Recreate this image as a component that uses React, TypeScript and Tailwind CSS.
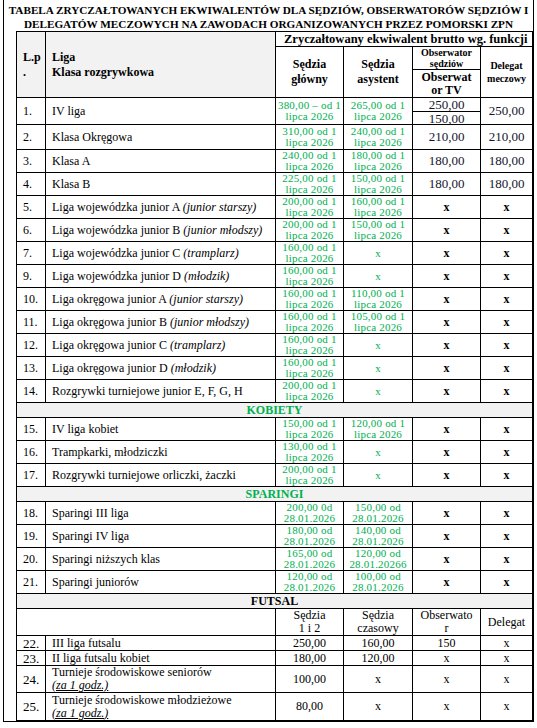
type Val = string | string[];

type Row = {
  n: string;
  name: React.ReactNode;
  g: Val;
  a: Val;
  obs: Val;
  del: string;
};

const od = (v: string) => [`${v} od 1`, 'lipca 2026'];

const main: Row[] = [
  { n: '1.', name: 'IV liga', g: ['380,00 – od 1', 'lipca 2026'], a: od('265,00'), obs: ['250,00', '150,00'], del: '250,00' },
  { n: '2.', name: 'Klasa Okręgowa', g: od('310,00'), a: od('240,00'), obs: '210,00', del: '210,00' },
  { n: '3.', name: 'Klasa A', g: od('240,00'), a: od('180,00'), obs: '180,00', del: '180,00' },
  { n: '4.', name: 'Klasa B', g: od('225,00'), a: od('150,00'), obs: '180,00', del: '180,00' },
  { n: '5.', name: <>Liga wojewódzka junior A <i>(junior starszy)</i></>, g: od('200,00'), a: od('160,00'), obs: 'x', del: 'x' },
  { n: '6.', name: <>Liga wojewódzka junior B <i>(junior młodszy)</i></>, g: od('200,00'), a: od('150,00'), obs: 'x', del: 'x' },
  { n: '7.', name: <>Liga wojewódzka junior C <i>(tramplarz)</i></>, g: od('160,00'), a: 'x', obs: 'x', del: 'x' },
  { n: '9.', name: <>Liga wojewódzka junior D <i>(młodzik)</i></>, g: od('160,00'), a: 'x', obs: 'x', del: 'x' },
  { n: '10.', name: <>Liga okręgowa junior A <i>(junior starszy)</i></>, g: od('160,00'), a: od('110,00'), obs: 'x', del: 'x' },
  { n: '11.', name: <>Liga okręgowa junior B <i>(junior młodszy)</i></>, g: od('160,00'), a: od('105,00'), obs: 'x', del: 'x' },
  { n: '12.', name: <>Liga okręgowa junior C <i>(tramplarz)</i></>, g: od('160,00'), a: 'x', obs: 'x', del: 'x' },
  { n: '13.', name: <>Liga okręgowa junior D <i>(młodzik)</i></>, g: od('160,00'), a: 'x', obs: 'x', del: 'x' },
  { n: '14.', name: 'Rozgrywki turniejowe junior E, F, G, H', g: od('200,00'), a: 'x', obs: 'x', del: 'x' },
];

const kobiety: Row[] = [
  { n: '15.', name: 'IV liga kobiet', g: od('150,00'), a: od('120,00'), obs: 'x', del: 'x' },
  { n: '16.', name: 'Trampkarki, młodziczki', g: od('130,00'), a: 'x', obs: 'x', del: 'x' },
  { n: '17.', name: 'Rozgrywki turniejowe orliczki, żaczki', g: od('200,00'), a: 'x', obs: 'x', del: 'x' },
];

const sparingi: Row[] = [
  { n: '18.', name: 'Sparingi III liga', g: ['200,00 0d', '28.01.2026'], a: ['150,00 od', '28.01.2026'], obs: 'x', del: 'x' },
  { n: '19.', name: 'Sparingi IV liga', g: ['180,00 od', '28.01.2026'], a: ['140,00 od', '28.01.2026'], obs: 'x', del: 'x' },
  { n: '20.', name: 'Sparingi niższych klas', g: ['165,00 od', '28.01.2026'], a: ['120,00 od', '28.01.20266'], obs: 'x', del: 'x' },
  { n: '21.', name: 'Sparingi juniorów', g: ['120,00 od', '28.01.2026'], a: ['100,00 od', '28.01.2026'], obs: 'x', del: 'x' },
];

const futsal = [
  { n: '22.', name: ['III liga futsalu'], v: ['250,00', '160,00', '150', 'x'], h: 'h-[15px]' },
  { n: '23.', name: ['II liga futsalu kobiet'], v: ['180,00', '120,00', 'x', 'x'], h: 'h-[15px]' },
  { n: '24.', name: ['Turnieje środowiskowe  seniorów', '(za 1 godz.)'], v: ['100,00', 'x', 'x', 'x'], h: 'h-[27px]' },
  { n: '25.', name: ['Turnieje środowiskowe młodzieżowe', '(za 1 godz.)'], v: ['80,00', 'x', 'x', 'x'], h: 'h-[28px]' },
];

const td = 'border border-black p-0';

function Green({ v }: { v: Val }) {
  if (typeof v === 'string') {
    return <td className={`${td} text-center text-[11px] text-[#00b050]`}>{v}</td>;
  }
  return (
    <td className={`${td} text-center text-[11px] leading-[11px] text-[#00b050] tracking-[0.2px]`}>
      {v[0]}
      <br />
      {v[1]}
    </td>
  );
}

function Plain({ v }: { v: Val }) {
  if (Array.isArray(v)) {
    return (
      <td className={`${td} text-center text-[13px] leading-none text-[#14142b]`}>
        <div className="h-[14px] border-b border-black flex items-center justify-center">{v[0]}</div>
        <div className="h-[12px] flex items-center justify-center">{v[1]}</div>
      </td>
    );
  }
  if (v === 'x') {
    return <td className={`${td} text-center text-[12px] font-bold`}>x</td>;
  }
  return <td className={`${td} text-center text-[13px] text-[#14142b]`}>{v}</td>;
}

function DataRow({ r, h }: { r: Row; h: string }) {
  return (
    <tr className={h}>
      <td className={`${td} pl-[6px] text-[12px]`}>{r.n}</td>
      <td className={`${td} pl-[6px] text-[12px] whitespace-nowrap overflow-hidden`}>{r.name}</td>
      <Green v={r.g} />
      <Green v={r.a} />
      <Plain v={r.obs} />
      <Plain v={r.del} />
    </tr>
  );
}

function Band({ label, green }: { label: string; green?: boolean }) {
  return (
    <tr className="h-[15px]">
      <td
        colSpan={6}
        className={`${td} bg-[#f2f2f2] text-center text-[12px] leading-[13px] font-bold ${green ? 'text-[#00b050]' : 'text-black'}`}
      >
        {label}
      </td>
    </tr>
  );
}

export default function App() {
  return (
    <div className="w-[537px] h-[728px] bg-white text-black font-['Liberation_Serif',serif] overflow-hidden">
      <div className="ml-[3px] w-[531px] h-[722px] border-l border-r border-b border-black">
        <div className="pt-[3px] text-center font-bold text-[11.2px] leading-[14px] whitespace-nowrap">
          TABELA ZRYCZAŁTOWANYCH EKWIWALENTÓW DLA SĘDZIÓW, OBSERWATORÓW SĘDZIÓW I
          <br />
          DELEGATÓW MECZOWYCH NA ZAWODACH ORGANIZOWANYCH PRZEZ POMORSKI ZPN
        </div>
        <table className="ml-[12px] w-[516px] table-fixed border-collapse">
          <colgroup>
            <col className="w-[29px]" />
            <col className="w-[230px]" />
            <col className="w-[68px]" />
            <col className="w-[69px]" />
            <col className="w-[68px]" />
            <col className="w-[52px]" />
          </colgroup>
          <tbody>
            <tr className="h-[15px]">
              <td rowSpan={3} className={`${td} bg-[#f2f2f2] pl-[6px] text-[12px] font-bold leading-[15px]`}>
                L.p
                <br />.
              </td>
              <td rowSpan={3} className={`${td} bg-[#f2f2f2] pl-[6px] text-[12px] font-bold leading-[15px]`}>
                Liga
                <br />
                Klasa rozgrywkowa
              </td>
              <td colSpan={4} className={`${td} pl-[8px] text-[12.5px] font-bold leading-[14px] whitespace-nowrap overflow-hidden`}>
                Zryczałtowany ekwiwalent brutto wg. funkcji
              </td>
            </tr>
            <tr className="h-[23px]">
              <td rowSpan={2} className={`${td} text-center text-[12px] font-bold leading-[15px]`}>
                Sędzia
                <br />
                główny
              </td>
              <td rowSpan={2} className={`${td} text-center text-[12px] font-bold leading-[15px]`}>
                Sędzia
                <br />
                asystent
              </td>
              <td className={`${td} text-center text-[10px] font-bold leading-[11px]`}>
                Obserwator
                <br />
                sędziów
              </td>
              <td rowSpan={2} className={`${td} text-center text-[10px] font-bold leading-[13px] whitespace-nowrap overflow-hidden`}>
                Delegat
                <br />
                meczowy
              </td>
            </tr>
            <tr className="h-[28px]">
              <td className={`${td} text-center text-[12px] font-bold leading-[13px]`}>
                Obserwat
                <br />
                or TV
              </td>
            </tr>
            {main.map((r, i) => (
              <DataRow key={r.n} r={r} h={i === 0 ? 'h-[27px]' : i === 1 ? 'h-[25px]' : 'h-[23px]'} />
            ))}
            <Band label="KOBIETY" green />
            {kobiety.map((r) => (
              <DataRow key={r.n} r={r} h="h-[23px]" />
            ))}
            <Band label="SPARINGI" green />
            {sparingi.map((r) => (
              <DataRow key={r.n} r={r} h="h-[23px]" />
            ))}
            <Band label="FUTSAL" />
            <tr className="h-[26px]">
              <td colSpan={2} className={td}></td>
              <td className={`${td} text-center text-[12px] leading-[13px]`}>
                Sędzia
                <br />1 i 2
              </td>
              <td className={`${td} text-center text-[12px] leading-[13px]`}>
                Sędzia
                <br />
                czasowy
              </td>
              <td className={`${td} text-center text-[12px] leading-[13px]`}>
                Obserwato
                <br />r
              </td>
              <td className={`${td} text-center text-[12px] leading-[13px]`}>Delegat</td>
            </tr>
            {futsal.map((f) => (
              <tr key={f.n} className={f.h}>
                <td className={`${td} pl-[6px] text-[13px] leading-[13px]`}>{f.n}</td>
                <td className={`${td} pl-[6px] text-[12px] leading-[13px] whitespace-nowrap`}>
                  {f.name[0]}
                  {f.name[1] && (
                    <>
                      <br />
                      <span className="italic underline">{f.name[1]}</span>
                    </>
                  )}
                </td>
                {f.v.map((v, i) => (
                  <td key={i} className={`${td} text-center text-[12px] leading-[13px]`}>
                    {v}
                  </td>
                ))}
              </tr>
            ))}
          </tbody>
        </table>
      </div>
    </div>
  );
}
